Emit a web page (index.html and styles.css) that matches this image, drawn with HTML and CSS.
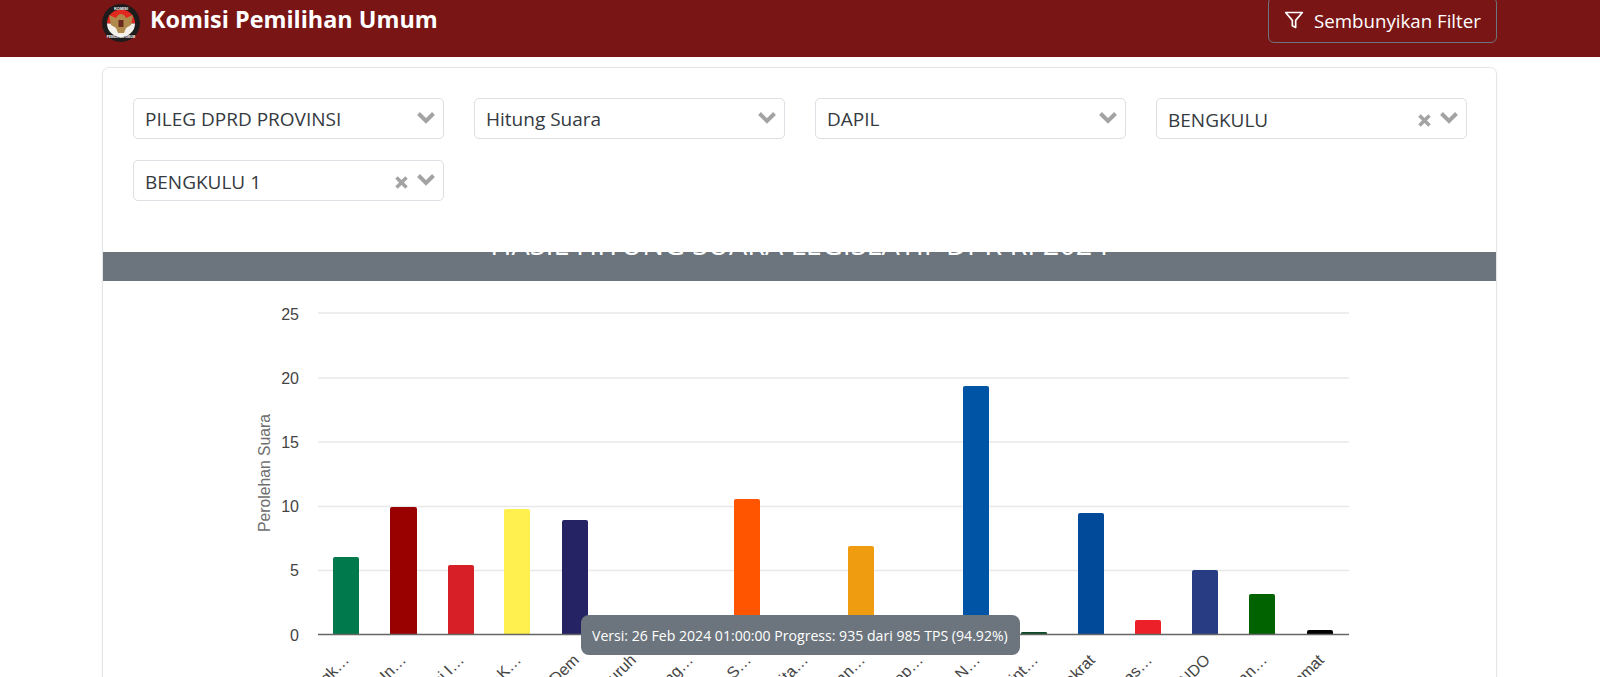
FILE: index.html
```html
<!DOCTYPE html>
<html lang="id">
<head>
<meta charset="utf-8">
<title>Komisi Pemilihan Umum</title>
<link rel="stylesheet" href="styles.css">
</head>
<body>
<header class="navbar">
  <div class="brand">
    <svg class="logo" viewBox="0 0 38 38" aria-hidden="true">
      <circle cx="19" cy="19" r="19" fill="#1d1b1b"/>
      <path d="M5 19.500a14 14 0 0 1 28 0z" fill="#e0281f"/>
      <path d="M5 19.500h28a14 13.500 0 0 1-28 0z" fill="#f4f1ea"/>
      <path d="M7 11l7 3 2-3 3-1 3 1 2 3 7-3-2 10-5 3-2 5h-6l-2-5-5-3z" fill="#b08a4c"/>
      <rect x="16.500" y="16" width="5" height="7" fill="#6b2a20"/>
      <text class="logo-top" x="19" y="5.500" text-anchor="middle">KOMISI</text>
      <text class="logo-bottom" x="19" y="34" text-anchor="middle">PEMILIHAN UMUM</text>
    </svg>
    <span class="brand-name">Komisi Pemilihan Umum</span>
  </div>
  <button class="filter-toggle" type="button">
    <svg class="funnel" viewBox="0 0 24 24" aria-hidden="true"><polygon points="22 3 2 3 10 12.460 10 19 14 21 14 12.460 22 3"/></svg>
    <span>Sembunyikan Filter</span>
  </button>
</header>

<main class="card">
  <section class="filters">
    <div class="select"><span class="select-value">PILEG DPRD PROVINSI</span><svg class="chevron" viewBox="0 0 18 13"><polyline points="1.500 2.500 9 10 16.500 2.500"/></svg></div>
    <div class="select"><span class="select-value">Hitung Suara</span><svg class="chevron" viewBox="0 0 18 13"><polyline points="1.500 2.500 9 10 16.500 2.500"/></svg></div>
    <div class="select"><span class="select-value">DAPIL</span><svg class="chevron" viewBox="0 0 18 13"><polyline points="1.500 2.500 9 10 16.500 2.500"/></svg></div>
    <div class="select"><span class="select-value select-value-low">BENGKULU</span><svg class="clear" viewBox="0 0 13 13"><path d="M1.500 1.500l10 10M11.500 1.500l-10 10"/></svg><svg class="chevron" viewBox="0 0 18 13"><polyline points="1.500 2.500 9 10 16.500 2.500"/></svg></div>
    <div class="select"><span class="select-value select-value-low">BENGKULU 1</span><svg class="clear" viewBox="0 0 13 13"><path d="M1.500 1.500l10 10M11.500 1.500l-10 10"/></svg><svg class="chevron" viewBox="0 0 18 13"><polyline points="1.500 2.500 9 10 16.500 2.500"/></svg></div>
  </section>

  <div class="band"><h2 class="band-title">HASIL HITUNG SUARA LEGISLATIF DPR RI 2024</h2></div>

  <svg class="chart" viewBox="103 281 1393 396" role="img" aria-label="Perolehan Suara">
    <g class="grid">
      <line x1="318" x2="1349" y1="313" y2="313"/>
      <line x1="318" x2="1349" y1="378" y2="378"/>
      <line x1="318" x2="1349" y1="442" y2="442"/>
      <line x1="318" x2="1349" y1="506.500" y2="506.500"/>
      <line x1="318" x2="1349" y1="570.500" y2="570.500"/>
    </g>
    <g class="ticks">
      <text x="299" y="320">25</text>
      <text x="299" y="384">20</text>
      <text x="299" y="447.500">15</text>
      <text x="299" y="512">10</text>
      <text x="299" y="576">5</text>
      <text x="299" y="640.500">0</text>
    </g>
    <text class="y-title" transform="translate(270 473) rotate(-90)" text-anchor="middle">Perolehan Suara</text>
    <g>
      <path fill="#007a4d" d="M333 634V559q0-2 2-2h22q2 0 2 2V634z"/>
      <path fill="#990000" d="M390 634V509q0-2 2-2h23q2 0 2 2V634z"/>
      <path fill="#d71f28" d="M448 634V567q0-2 2-2h22q2 0 2 2V634z"/>
      <path fill="#fff04f" d="M504 634V511q0-2 2-2h22q2 0 2 2V634z"/>
      <path fill="#252364" d="M562 634V522q0-2 2-2h22q2 0 2 2V634z"/>
      <path fill="#ff5500" d="M734 634V501q0-2 2-2h22q2 0 2 2V634z"/>
      <path fill="#f09c10" d="M848 634V548q0-2 2-2h22q2 0 2 2V634z"/>
      <path fill="#0054a6" d="M963 634V388q0-2 2-2h22q2 0 2 2V634z"/>
      <path fill="#0b4a24" d="M1021 634V633q0-1 2-1h22q2 0 2 1V634z"/>
      <path fill="#004a99" d="M1078 634V515q0-2 2-2h22q2 0 2 2V634z"/>
      <path fill="#ec2028" d="M1135 634V622q0-2 2-2h22q2 0 2 2V634z"/>
      <path fill="#273c82" d="M1192 634V572q0-2 2-2h22q2 0 2 2V634z"/>
      <path fill="#006300" d="M1249 634V596q0-2 2-2h22q2 0 2 2V634z"/>
      <path fill="#000000" d="M1307 634V632q0-2 2-2h22q2 0 2 2V634z"/>
    </g>
    <line class="axis" x1="318" x2="1349" y1="634.500" y2="634.500"/>
    <g class="labels" text-anchor="end">
      <text transform="translate(350 661) rotate(-45)">Partai Kebangk…</text>
      <text transform="translate(407 661) rotate(-45)">Partai Gerakan In…</text>
      <text transform="translate(465 661) rotate(-45)">Partai Demokrasi I…</text>
      <text transform="translate(522 661) rotate(-45)">Partai Golongan K…</text>
      <text transform="translate(580 661) rotate(-45)">Partai NasDem</text>
      <text transform="translate(637 661) rotate(-45)">Partai Buruh</text>
      <text transform="translate(694 661) rotate(-45)">Partai Gelombang…</text>
      <text transform="translate(752 661) rotate(-45)">Partai Keadilan S…</text>
      <text transform="translate(809 661) rotate(-45)">Partai Kebangkita…</text>
      <text transform="translate(866 661) rotate(-45)">Partai Hati Nuran…</text>
      <text transform="translate(924 661) rotate(-45)">Partai Garda Rep…</text>
      <text transform="translate(981 661) rotate(-45)">Partai Amanat N…</text>
      <text transform="translate(1039 661) rotate(-45)">Partai Bulan Bint…</text>
      <text transform="translate(1096 661) rotate(-45)">Partai Demokrat</text>
      <text transform="translate(1153 661) rotate(-45)">Partai Solidaritas…</text>
      <text transform="translate(1211 661) rotate(-45)">PERINDO</text>
      <text transform="translate(1268 661) rotate(-45)">Partai Persatuan…</text>
      <text transform="translate(1325 661) rotate(-45)">Partai Ummat</text>
    </g>
  </svg>

  <div class="tooltip">Versi: 26 Feb 2024 01:00:00 Progress: 935 dari 985 TPS (94.92%)</div>
</main>
</body>
</html>
```
FILE: styles.css
```css
* { box-sizing: border-box; }
html, body { margin: 0; height: 677px; overflow: hidden; background: #fff; }
body { font-family: "Open Sans", "Noto Sans", sans-serif; color: #343a40; }

.navbar {
  height: 57px;
  background: #7a1515;
  display: flex;
  justify-content: space-between;
  align-items: flex-end;
  padding: 0 103px 14px 102px;
  overflow: hidden;
}
.brand { display: flex; align-items: center; gap: 10px; margin-bottom: 1px; }
.logo { width: 38px; height: 38px; display: block; }
.logo-top { font: 700 4px "Liberation Sans", sans-serif; fill: #fff; }
.logo-bottom { font: 700 3.200px "Liberation Sans", sans-serif; fill: #fff; }
.brand-name { color: #fff; font-size: 23.400px; font-weight: 700; line-height: 38px; position: relative; top: -4px; }

.filter-toggle {
  width: 229px;
  height: 46px;
  display: flex;
  align-items: center;
  gap: 10px;
  padding: 0 0 0 15px;
  background: transparent;
  border: 1px solid #6c757d;
  border-radius: 6px;
  color: #fff;
  font: 400 18.700px "Open Sans", sans-serif;
  white-space: nowrap;
}
.funnel { width: 20px; height: 20px; fill: none; stroke: #fff; stroke-width: 2; stroke-linejoin: round; stroke-linecap: round; flex: none; }

.card {
  position: relative;
  margin: 10px 103px 0 102px;
  height: 700px;
  border: 1px solid #e4e6ea;
  border-radius: 7px;
  background: #fff;
  box-shadow: 0 1px 3px rgba(0, 0, 0, .05);
}
.filters {
  display: grid;
  grid-template-columns: repeat(4, 1fr);
  column-gap: 30px;
  row-gap: 21px;
  padding: 30px 29px 51px 30px;
}
.select {
  height: 41px;
  display: flex;
  align-items: center;
  gap: 9px;
  padding: 0 8px 0 11px;
  border: 1px solid #dcdfe3;
  border-radius: 5px;
  background: #fff;
  font-size: 19px;
}
.select-value { flex: 1; color: #343a40; white-space: nowrap; }
.select-value-low { padding-top: 2px; }
.chevron { width: 18px; height: 13px; fill: none; stroke: #a3a3a3; stroke-width: 4; flex: none; margin-top: -3px; }
.clear { width: 13px; height: 13px; fill: none; stroke: #a3a3a3; stroke-width: 3.500; flex: none; margin: 4px 0 0 0; }

.band { height: 29px; background: #6c757d; overflow: hidden; text-align: center; }
.band-title { margin: -25px 0 0; color: #fff; font-size: 28.800px; line-height: 33px; font-weight: 500; white-space: nowrap; }

.chart { display: block; width: 1393px; height: 396px; }
.grid line { stroke: #e8e8e8; stroke-width: 1.500; }
.ticks text { font: 16px "Liberation Sans", Arial, sans-serif; fill: #444; text-anchor: end; }
.y-title { font: 15.700px "Liberation Sans", Arial, sans-serif; fill: #6e6e6e; }
.axis { stroke: #666; stroke-width: 1.500; }
.labels text { font: 16px "Liberation Sans", Arial, sans-serif; fill: #444; }

.tooltip {
  position: absolute;
  left: 478px;
  top: 547px;
  width: 439px;
  height: 40px;
  padding: 0 11px;
  display: flex;
  align-items: center;
  background: #6c757d;
  border-radius: 8px;
  color: #fff;
  font-size: 14.100px;
  white-space: nowrap;
}
```
